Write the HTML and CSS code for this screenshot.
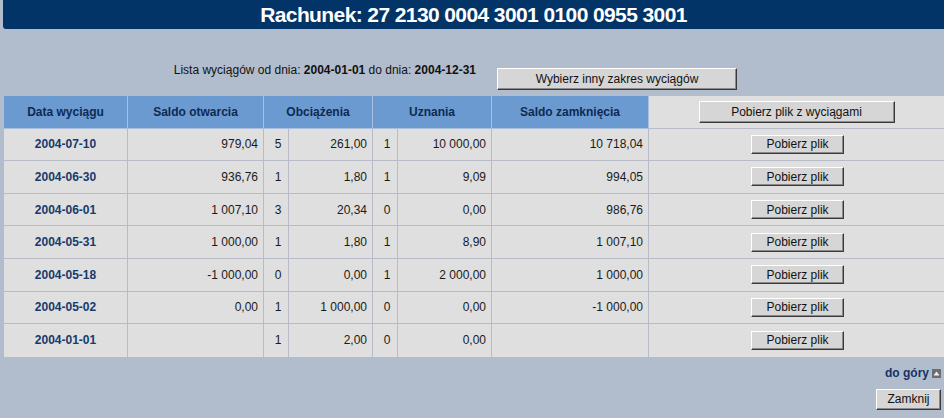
FILE: index.html
```html
<!DOCTYPE html>
<html lang="pl">
<head>
<meta charset="utf-8">
<title>Rachunek</title>
<link rel="stylesheet" href="styles.css">
</head>
<body>
<h1 class="title">Rachunek: 27 2130 0004 3001 0100 0955 3001</h1>

<div class="range">
  <div class="range-label">Lista wyciągów od dnia: <b>2004-01-01</b> do dnia: <b>2004-12-31</b></div>
  <button class="btn btn-range">Wybierz inny zakres wyciągów</button>
</div>

<table class="statements">
  <colgroup>
    <col class="c-date"><col class="c-open"><col class="c-cnt"><col class="c-amt1"><col class="c-cnt"><col class="c-amt2"><col class="c-close"><col class="c-act">
  </colgroup>
  <thead>
    <tr>
      <th>Data wyciągu</th>
      <th>Saldo otwarcia</th>
      <th colspan="2">Obciążenia</th>
      <th colspan="2">Uznania</th>
      <th>Saldo zamknięcia</th>
      <th class="th-act"><button class="btn btn-all">Pobierz plik z wyciągami</button></th>
    </tr>
  </thead>
  <tbody>
    <tr><td class="date">2004-07-10</td><td class="num">979,04</td><td class="cnt">5</td><td class="num">261,00</td><td class="cnt">1</td><td class="num">10 000,00</td><td class="num">10 718,04</td><td class="act"><button class="btn btn-file">Pobierz plik</button></td></tr>
    <tr><td class="date">2004-06-30</td><td class="num">936,76</td><td class="cnt">1</td><td class="num">1,80</td><td class="cnt">1</td><td class="num">9,09</td><td class="num">994,05</td><td class="act"><button class="btn btn-file">Pobierz plik</button></td></tr>
    <tr><td class="date">2004-06-01</td><td class="num">1 007,10</td><td class="cnt">3</td><td class="num">20,34</td><td class="cnt">0</td><td class="num">0,00</td><td class="num">986,76</td><td class="act"><button class="btn btn-file">Pobierz plik</button></td></tr>
    <tr><td class="date">2004-05-31</td><td class="num">1 000,00</td><td class="cnt">1</td><td class="num">1,80</td><td class="cnt">1</td><td class="num">8,90</td><td class="num">1 007,10</td><td class="act"><button class="btn btn-file">Pobierz plik</button></td></tr>
    <tr><td class="date">2004-05-18</td><td class="num">-1 000,00</td><td class="cnt">0</td><td class="num">0,00</td><td class="cnt">1</td><td class="num">2 000,00</td><td class="num">1 000,00</td><td class="act"><button class="btn btn-file">Pobierz plik</button></td></tr>
    <tr><td class="date">2004-05-02</td><td class="num">0,00</td><td class="cnt">1</td><td class="num">1 000,00</td><td class="cnt">0</td><td class="num">0,00</td><td class="num">-1 000,00</td><td class="act"><button class="btn btn-file">Pobierz plik</button></td></tr>
    <tr><td class="date">2004-01-01</td><td class="num"></td><td class="cnt">1</td><td class="num">2,00</td><td class="cnt">0</td><td class="num">0,00</td><td class="num"></td><td class="act"><button class="btn btn-file">Pobierz plik</button></td></tr>
  </tbody>
</table>

<div class="top-link"><a href="#">do góry</a><svg class="top-icon" width="9" height="9" viewBox="0 0 9 9"><rect width="9" height="9" fill="#6e6e6e"/><path d="M1.5 6.5 L4.5 2.5 L7.5 6.5 Z" fill="#f2f2f2"/></svg></div>

<div class="footer">
  <button class="btn btn-close">Zamknij</button>
</div>
</body>
</html>
```

FILE: styles.css
```css
html, body {
  margin: 0;
  padding: 0;
}

body {
  background: #b1bdcc;
  font-family: "Liberation Sans", Arial, sans-serif;
  font-size: 12px;
  color: #1a1a1a;
}

.title {
  margin: 0 0 0 3px;
  height: 29px;
  line-height: 29px;
  background: #033468;
  color: #ffffff;
  text-align: center;
  font-size: 21px;
  font-weight: bold;
  letter-spacing: -0.6px;
  border-bottom-left-radius: 3px;
}

.range {
  display: flex;
  align-items: flex-start;
  margin: 34px 0 0 4px;
}

.range-label {
  width: 487px;
  box-sizing: border-box;
  padding-right: 15px;
  text-align: right;
  line-height: 14px;
  color: #111;
}

.btn {
  font-family: "Liberation Sans", Arial, sans-serif;
  font-size: 12px;
  color: #111;
  background: #d6d6d6;
  border-top: 1px solid #ffffff;
  border-left: 1px solid #ffffff;
  border-right: 1px solid #3a3a3a;
  border-bottom: 1px solid #3a3a3a;
  box-shadow: inset -1px -1px 0 #8a8a8a;
  padding: 0;
  margin: 0;
  box-sizing: border-box;
  cursor: pointer;
}

.btn-range {
  margin: 5px 0 0 6px;
  width: 240px;
  height: 22px;
}

.statements {
  margin: 6px 0 0 4px;
  width: 940px;
  table-layout: fixed;
  border-collapse: separate;
  border-spacing: 0;
}

.c-date { width: 124px; }
.c-open { width: 136px; }
.c-cnt { width: 25px; }
.c-amt1 { width: 84px; }
.c-amt2 { width: 94px; }
.c-close { width: 157px; }
.c-act { width: 295px; }

.statements th,
.statements td {
  height: 32.6px;
  box-sizing: border-box;
  padding: 0;
  border-right: 1px solid #b7bbc7;
  border-bottom: 1px solid #b7bbc7;
  background: #dfdfdf;
  vertical-align: middle;
}

.statements th:last-child,
.statements td:last-child {
  border-right: none;
}

.statements tbody tr:last-child td {
  border-bottom: none;
}

.statements th {
  background: #6a9ad0;
  color: #0e2a52;
  font-weight: bold;
  text-align: center;
  border-right-color: #a9bfdb;
  border-bottom-color: #a9bfdb;
}

.statements th.th-act {
  background: #dfdfdf;
  border-bottom-color: #b7bbc7;
}

.btn-all {
  width: 196px;
  height: 22px;
}

.date {
  text-align: center;
  font-weight: bold;
  color: #173a6b;
}

.num {
  text-align: right;
  padding-right: 5px !important;
}

.cnt {
  text-align: center;
  padding-left: 4px !important;
}

.act {
  text-align: center;
}

.btn-file {
  width: 93px;
  height: 19px;
  margin-left: 2px;
}

.top-link {
  margin-top: 8px;
  padding-right: 3px;
  text-align: right;
  line-height: 16px;
}

.top-link a {
  color: #143466;
  font-weight: bold;
  text-decoration: none;
}

.top-icon {
  margin-left: 3px;
  vertical-align: -1px;
}

.footer {
  margin-top: 8px;
  padding-right: 3px;
  text-align: right;
}

.btn-close {
  width: 65px;
  height: 21px;
}
```
